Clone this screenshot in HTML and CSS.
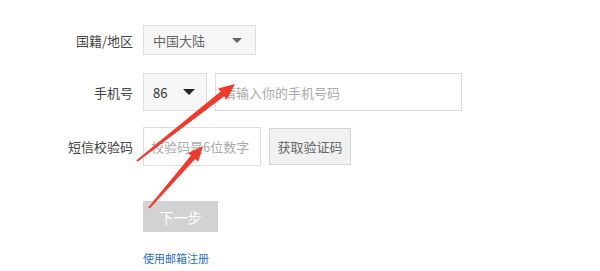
FILE: index.html
```html
<!DOCTYPE html>
<html lang="zh">
<head>
<meta charset="utf-8">
<link rel="stylesheet" href="styles.css">
</head>
<body>
<div class="form">
  <div class="row row1">
    <div class="label">国籍/地区</div>
    <div class="select sel-country"><span>中国大陆</span><i class="caret caret-light"></i></div>
  </div>
  <div class="row row2">
    <div class="label">手机号</div>
    <div class="select sel-code"><span>86</span><i class="caret caret-dark"></i></div>
    <div class="input input-phone">请输入你的手机号码</div>
  </div>
  <div class="row row3">
    <div class="label">短信校验码</div>
    <div class="input input-code">校验码是6位数字</div>
    <div class="btn-get">获取验证码</div>
  </div>
  <div class="row row4">
    <div class="label"></div>
    <div class="btn-next">下一步</div>
  </div>
  <div class="row row5">
    <div class="label"></div>
    <a class="link">使用邮箱注册</a>
  </div>
</div>
<svg class="arrows" width="600" height="271" viewBox="0 0 600 271">
  <polygon fill="#f03a2e" points="136.4,160.2 220.6,91.5 218.1,88.4 235,84 226.7,99.4 224.2,96.3 137.6,161.8"/>
  <polygon fill="#f03a2e" points="148.2,207.4 191.0,155.5 188.0,152.9 203,146 198.2,161.7 195.2,159.1 149.8,208.6"/>
</svg>
</body>
</html>
```
FILE: styles.css
```css
html, body { margin: 0; padding: 0; background: #fff; }
body {
  width: 600px; height: 271px; overflow: hidden; position: relative;
  font-family: "Noto Sans CJK SC", "Noto Sans", sans-serif;
  font-size: 13px; color: #333;
}
.form { display: flex; flex-direction: column; padding-top: 25px; }
.row { display: flex; align-items: center; }
.label { width: 143px; flex: none; padding-right: 10px; box-sizing: border-box; text-align: right; color: #444; font-size: 13px; }
.row1 { height: 30px; }
.row2 { height: 38px; margin-top: 18px; }
.row3 { height: 39px; margin-top: 16px; }
.row4 { height: 31px; margin-top: 35px; }
.row5 { margin-top: 18px; }
.select {
  box-sizing: border-box; height: 100%; display: flex; align-items: center; justify-content: space-between;
  background: #f6f6f6; border: 1px solid #ddd; padding: 0 13px 0 9px; color: #666;
}
.sel-country { width: 113px; }
.sel-code { width: 64px; color: #333; padding-left: 9px; padding-right: 11px; }
.caret { width: 0; height: 0; border-left: 5px solid transparent; border-right: 5px solid transparent; }
.caret-light { border-top: 5px solid #666; }
.caret-dark { border-top: 6px solid #222; border-left-width: 6px; border-right-width: 6px; }
.input {
  box-sizing: border-box; height: 100%; border: 1px solid #ddd; background: #fff;
  color: #aaa; display: flex; align-items: center; padding-left: 7px;
}
.input-phone { width: 247px; margin-left: 8px; }
.input-code { width: 118px; }
.btn-get {
  box-sizing: border-box; width: 82px; height: 37px; margin-left: 8px;
  background: #f1f1f1; border: 1px solid #d4d4d4; color: #666;
  display: flex; align-items: center; justify-content: center;
}
.btn-next {
  width: 75px; height: 31px; background: #d2d2d2; color: #fff; font-size: 14px;
  display: flex; align-items: center; justify-content: center;
}
.link { color: #2a6fc4; font-size: 11px; text-decoration: none; }
.arrows { position: absolute; left: 0; top: 0; pointer-events: none; }
```
